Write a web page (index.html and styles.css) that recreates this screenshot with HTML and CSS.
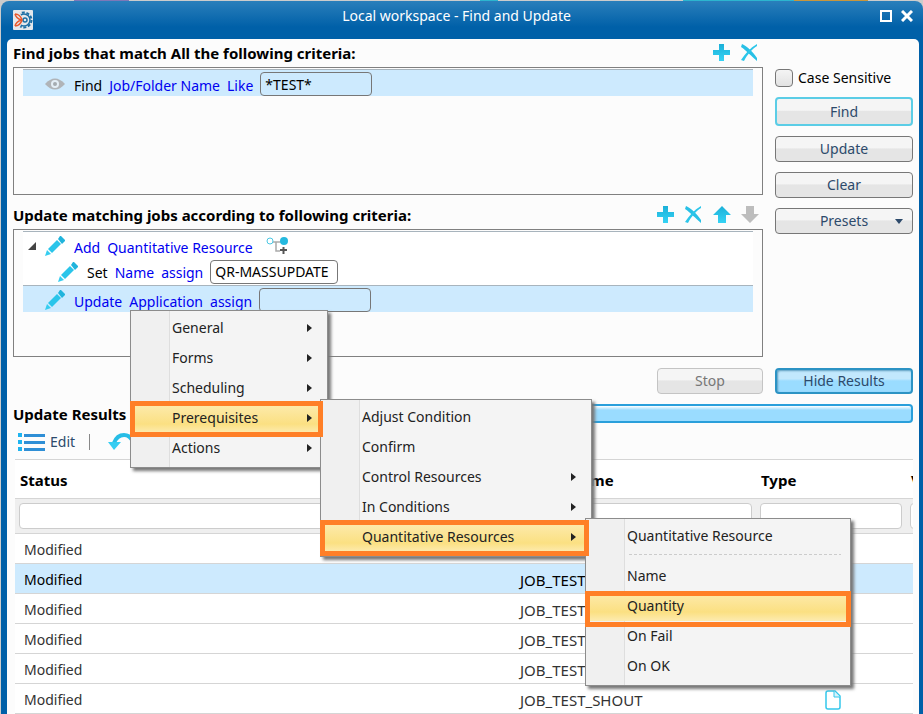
FILE: index.html
```
<!DOCTYPE html>
<html lang="en">
<head>
    <meta charset="UTF-8">
    <meta name="viewport" content="width=device-width, initial-scale=1.0">
    <title>Local workspace - Find and Update</title>
    <link rel="stylesheet" href="styles.css">
</head>
<body>
    <svg class="defs" width="0" height="0">
        <defs>
            <linearGradient id="cyan" x1="0" y1="0" x2="0" y2="1">
                <stop offset="0" stop-color="#1cb0d8"/>
                <stop offset="1" stop-color="#35d3f5"/>
            </linearGradient>
            <symbol id="plus" viewBox="0 0 18 18">
                <path d="M6 0h5v6h6v5h-6v6H6v-6H0V6h6z" fill="url(#cyan)"/>
            </symbol>
            <symbol id="cross" viewBox="0 0 18 18">
                <path d="M1 0C6 2 12 8 16 14V17C11 13 5 6 0 3z" fill="#28c0e6"/>
                <path d="M16 0v2C11 5 6 11 3 17L0 16C4 10 9 4 16 0z" fill="#2cc6ea"/>
            </symbol>
            <symbol id="pencil" viewBox="0 0 20 20">
                <path d="M13 3l2-3h1l4 4v1l-3 3z" fill="#20b4dc"/>
                <path d="M12 4l4 4L7 17l-4-4z" fill="#2ac5ea"/>
                <path d="M2 14l4 4-6 2z" fill="#35cdf0"/>
            </symbol>
            <symbol id="up" viewBox="0 0 18 18">
                <path d="M9 0l9 9h-5v8H5V9H0z" fill="url(#cyan)"/>
            </symbol>
            <symbol id="down" viewBox="0 0 18 18">
                <path d="M5 0h8v8h5l-9 9-9-9h5z" fill="#bdbdbd"/>
            </symbol>
        </defs>
    </svg>

    <div class="window">
        <header class="titlebar">
            <svg class="logo" width="20" height="20" viewBox="0 0 20 20">
                <rect width="20" height="20" rx="1" fill="#e4e8ec"/>
                <circle cx="11" cy="10" r="7.500" fill="none" stroke="#1d6fa5" stroke-width="2" stroke-dasharray="3 1.700"/>
                <circle cx="11" cy="10" r="6" fill="none" stroke="#1d6fa5" stroke-width="1.500"/>
                <path d="M0 3h7l3 7-3 7H0z" fill="#e4e8ec"/>
                <circle cx="12" cy="10" r="2" fill="none" stroke="#1d6fa5" stroke-width="1.500"/>
                <path d="M2 4q5 0 7 6q-2 6-7 6M2 4q1 4 6 6q-5 2-6 6" fill="none" stroke="#e8582c" stroke-width="1.500"/>
            </svg>
            <h1>Local workspace - Find and Update</h1>
            <button class="win-btn" aria-label="Maximize">
                <svg width="12" height="12"><path d="M1 1h10v10H1z" fill="none" stroke="#fff" stroke-width="2"/></svg>
            </button>
            <button class="win-btn" aria-label="Close">
                <svg width="12" height="12"><path d="M1 1l10 10M11 1L1 11" stroke="#fff" stroke-width="3"/></svg>
            </button>
        </header>

        <main class="panel">
            <div class="top">
                <div class="criteria">
                    <div class="section-head">
                        <h2>Find jobs that match All the following criteria:</h2>
                        <div class="tools">
                            <button aria-label="Add"><svg width="18" height="18"><use href="#plus"/></svg></button>
                            <button aria-label="Delete"><svg width="18" height="18"><use href="#cross"/></svg></button>
                        </div>
                    </div>
                    <div class="tree">
                        <div class="node first selected">
                            <svg width="20" height="12" viewBox="0 0 20 12">
                                <path d="M0 6Q10-5 20 6Q10 17 0 6z" fill="#b0b4b8"/>
                                <circle cx="10" cy="6" r="4" fill="#e4eef6"/>
                                <circle cx="10" cy="6" r="2" fill="#a5abb0"/>
                            </svg>
                            <span>Find</span>
                            <a href="#">Job/Folder Name</a>
                            <a href="#">Like</a>
                            <input class="value" type="text" value="*TEST*" aria-label="Job/Folder Name">
                        </div>
                    </div>

                    <div class="section-head update-head">
                        <h2>Update matching jobs according to following criteria:</h2>
                        <div class="tools">
                            <button aria-label="Add"><svg width="18" height="18"><use href="#plus"/></svg></button>
                            <button aria-label="Delete"><svg width="18" height="18"><use href="#cross"/></svg></button>
                            <button aria-label="Move up"><svg width="18" height="18"><use href="#up"/></svg></button>
                            <button aria-label="Move down"><svg width="18" height="18"><use href="#down"/></svg></button>
                        </div>
                    </div>
                    <div class="tree">
                        <div class="node first white has-toggle">
                            <svg class="toggle" width="9" height="9"><path d="M8 0v8H0z" fill="#444"/></svg>
                            <svg width="20" height="20"><use href="#pencil"/></svg>
                            <a href="#">Add</a>
                            <a href="#">Quantitative Resource</a>
                            <svg class="branch" width="22" height="18" viewBox="0 0 22 18">
                                <path d="M7 5h8M10 5v9h4" fill="none" stroke="#aaa" stroke-width="1.500"/>
                                <circle cx="4" cy="4" r="3" fill="#fff" stroke="#4cc8e4"/>
                                <circle cx="18" cy="4" r="4" fill="#25b9df"/>
                                <path d="M14 13h7M17.500 10v7" stroke="#555" stroke-width="2"/>
                            </svg>
                        </div>
                        <div class="node white child">
                            <svg width="20" height="20"><use href="#pencil"/></svg>
                            <span>Set</span>
                            <a href="#">Name</a>
                            <a href="#">assign</a>
                            <input class="value wide" type="text" value="QR-MASSUPDATE" aria-label="Resource name">
                        </div>
                        <div class="node first selected">
                            <svg width="20" height="20"><use href="#pencil"/></svg>
                            <a href="#">Update</a>
                            <a href="#">Application</a>
                            <a href="#">assign</a>
                            <input class="value" type="text" aria-label="Application">
                        </div>
                    </div>
                </div>

                <div class="actions">
                    <label class="case"><input type="checkbox"> Case Sensitive</label>
                    <button class="btn focus">Find</button>
                    <button class="btn">Update</button>
                    <button class="btn">Clear</button>
                    <button class="btn presets">Presets<svg width="8" height="5"><path d="M0 0h8L4 5z" fill="#2d4a6b"/></svg></button>
                </div>
            </div>

            <div class="result-actions">
                <button class="btn stop" disabled>Stop</button>
                <button class="btn pressed">Hide Results</button>
            </div>

            <div class="progress-row">
                <h2>Update Results</h2>
                <div class="bar"></div>
            </div>

            <div class="toolbar">
                <button class="edit">
                    <svg width="28" height="18" viewBox="0 0 28 18">
                        <path d="M0 0h4v4H0zM0 7h4v4H0zM0 14h4v4H0z" fill="#1eb4f0"/>
                        <path d="M6 1h21v3H6zM6 8h21v3H6zM6 15h21v3H6z" fill="#2f8fd6"/>
                    </svg>
                    Edit
                </button>
                <span class="divider"></span>
                <button aria-label="Undo">
                    <svg width="26" height="18" viewBox="0 0 26 18">
                        <path d="M6 10Q9 2 16 2Q22 2 25 9" fill="none" stroke="#27bde6" stroke-width="4"/>
                        <path d="M0 9h13l-7 8z" fill="#35cdf2"/>
                    </svg>
                </button>
            </div>

            <table class="results">
                <colgroup>
                    <col>
                    <col class="col-name">
                    <col class="col-type">
                    <col class="col-last">
                </colgroup>
                <thead>
                    <tr class="titles"><th>Status</th><th>Object Name</th><th>Type</th><th>Version</th></tr>
                    <tr class="filters">
                        <td><input type="text" aria-label="Filter status"></td>
                        <td><input type="text" aria-label="Filter name"></td>
                        <td><input type="text" aria-label="Filter type"></td>
                        <td><input type="text" aria-label="Filter version"></td>
                    </tr>
                </thead>
                <tbody>
                    <tr><td>Modified</td><td class="name"></td><td></td><td></td></tr>
                    <tr class="selected"><td>Modified</td><td class="name">JOB_TEST</td><td></td><td></td></tr>
                    <tr><td>Modified</td><td class="name">JOB_TEST</td><td></td><td></td></tr>
                    <tr><td>Modified</td><td class="name">JOB_TEST</td><td></td><td></td></tr>
                    <tr><td>Modified</td><td class="name">JOB_TEST</td><td></td><td></td></tr>
                    <tr>
                        <td>Modified</td>
                        <td class="name">JOB_TEST_SHOUT</td>
                        <td class="type">
                            <svg width="16" height="20" viewBox="0 0 16 20">
                                <path d="M3 1h7l5 5v11q0 2-2 2H3q-2 0-2-2V3q0-2 2-2z" fill="#fff" stroke="#35c8ec" stroke-width="1.500"/>
                                <path d="M9 1v6h6" fill="#d9f3fb" stroke="#35c8ec"/>
                            </svg>
                        </td>
                        <td></td>
                    </tr>
                    <tr><td></td><td></td><td></td><td></td></tr>
                </tbody>
            </table>
        </main>
    </div>

    <ul class="menu">
        <li class="more">General</li>
        <li class="more">Forms</li>
        <li class="more">Scheduling</li>
        <li class="more active">Prerequisites
            <ul class="menu sub">
                <li>Adjust Condition</li>
                <li>Confirm</li>
                <li class="more">Control Resources</li>
                <li class="more">In Conditions</li>
                <li class="more active">Quantitative Resources
                    <ul class="menu sub last">
                        <li>Quantitative Resource</li>
                        <li class="separator"></li>
                        <li>Name</li>
                        <li class="active">Quantity</li>
                        <li>On Fail</li>
                        <li>On OK</li>
                    </ul>
                </li>
            </ul>
        </li>
        <li class="more">Actions</li>
    </ul>
</body>
</html>
```

FILE: styles.css
```
* {
    box-sizing: border-box;
}
html, body {
    height: 100%;
    margin: 0;
}
body {
    position: relative;
    overflow: hidden;
    padding: 1px 0 0 1px;
    font-family: "Noto Sans", Tahoma, sans-serif;
    font-size: 14px;
    line-height: 20px;
    color: #000;
    background: linear-gradient(90deg, #ccc 0 8%, #7d78b8 8% 14%, #ccc 14% 52%, #2cb5cf 52% 54%, #ccc 54% 74%, #2cb5cf 74% 86%, #c8963c 86% 94%, #ccc 94%);
}
.defs {
    position: absolute;
}
h1, h2 {
    margin: 0;
}
h2 {
    font-size: 15px;
    font-weight: bold;
}
button, input {
    font: inherit;
}
button {
    padding: 0;
    border: none;
    background: none;
    color: #2d4a6b;
}
svg {
    display: block;
    flex: none;
}
.window {
    display: flex;
    flex-direction: column;
    height: 100%;
    padding: 0 4px 0 6px;
    border-radius: 8px 8px 0 0;
    background: linear-gradient(#2a7fbb, #0060a8 26px, #0060a8);
}
.titlebar {
    display: flex;
    align-items: center;
    gap: 9px;
    height: 38px;
    padding: 0 6px;
}
.titlebar h1 {
    flex: 1;
    padding-bottom: 8px;
    font-size: 14px;
    font-weight: normal;
    text-align: center;
    color: #fff;
}
.win-btn {
    padding-bottom: 8px;
}
.panel {
    flex: 1;
    min-height: 0;
    overflow: hidden;
    padding: 0 6px;
    border-radius: 5px 5px 0 0;
    background: #fcfcfc;
}
.top {
    display: grid;
    grid-template-columns: 1fr 138px;
    gap: 12px;
}
.section-head {
    display: flex;
    align-items: center;
    justify-content: space-between;
    height: 28px;
}
.update-head {
    height: 34px;
    padding-top: 6px;
}
.tools {
    display: flex;
    gap: 10px;
    padding-right: 4px;
}
.tree {
    height: 128px;
    padding: 1px 9px;
    border: 1px solid #808080;
}
.node {
    display: flex;
    align-items: center;
    gap: 7px;
    height: 27px;
    padding-left: 22px;
    padding-top: 2px;
}
.node.first {
    border-top: 1px solid #a8b4bd;
}
.node.white {
    background: #fff;
}
.node.selected {
    background: #cdeafe;
}
.node.child {
    padding-left: 35px;
    padding-top: 0;
}
.node.has-toggle {
    padding-left: 5px;
}
.node svg {
    margin-right: 2px;
}
.node .toggle {
    margin-right: 1px;
}
.node .branch {
    margin-left: 6px;
}
.node a, .node span {
    padding-top: 3px;
}
.node a {
    color: #0000f0;
    text-decoration: none;
}
.value {
    width: 112px;
    height: 24px;
    padding: 0 4px;
    border: 1px solid #777;
    border-radius: 4px;
    background: transparent;
}
.value.wide {
    width: 128px;
}
.actions {
    display: flex;
    flex-direction: column;
    gap: 10px;
    padding-top: 30px;
}
.case {
    display: flex;
    align-items: center;
    gap: 5px;
    height: 18px;
}
.case input {
    appearance: none;
    width: 18px;
    height: 18px;
    margin: 0;
    border: 1px solid #777;
    border-radius: 4px;
    background: linear-gradient(#f4f4f4, #e2e2e2);
}
.btn {
    height: 26px;
    border: 1px solid #777;
    border-radius: 4px;
    background: linear-gradient(#f5f5f5 0 45%, #e5e5e5 50%);
}
.btn.focus {
    height: 29px;
    border: 2px solid #5bcde6;
}
.presets {
    display: grid;
    grid-template-columns: 1fr auto 1fr;
    align-items: center;
}
.presets::before {
    content: "";
}
.presets svg {
    justify-self: end;
    margin-right: 9px;
}
.result-actions {
    display: flex;
    justify-content: flex-end;
    gap: 12px;
    padding-top: 11px;
}
.stop {
    width: 106px;
    border-color: #c4c4c4;
    color: #777;
}
.pressed {
    width: 138px;
    border: 2px solid #2c93c4;
    background: linear-gradient(#c2e8fd 0 40%, #9adcff 50%);
    box-shadow: inset 1px 1px 2px #5c9dbf;
}
.progress-row {
    display: flex;
    align-items: center;
    gap: 10px;
    height: 19px;
    margin-top: 10px;
}
.bar {
    flex: 1;
    height: 19px;
    border: 2px solid #2a9fdb;
    border-radius: 4px;
    background: linear-gradient(#fff, #9adcff 4px);
}
.toolbar {
    display: flex;
    align-items: center;
    gap: 14px;
    height: 36px;
    padding: 2px 0 0 5px;
}
.edit {
    display: flex;
    align-items: center;
    gap: 4px;
}
.divider {
    width: 1px;
    height: 16px;
    margin-right: 4px;
    background: #888;
}
.results {
    width: 100%;
    table-layout: fixed;
    border-collapse: collapse;
    border-left: 2px solid #fcfcfc;
    background: #fff;
}
.col-name {
    width: 245px;
}
.col-type {
    width: 150px;
}
.col-last {
    width: 7px;
}
.results th, .results td {
    overflow: hidden;
    padding: 2px 0 0 9px;
    height: 30px;
    border-top: 1px solid #d5d5d5;
    text-align: left;
    white-space: nowrap;
    color: #333;
}
.results .titles th {
    height: 39px;
    padding-left: 5px;
    font-size: 15px;
    color: #000;
}
.results .filters td {
    height: 35px;
    padding: 0 4px;
    background: #efefef;
}
.filters input {
    display: block;
    width: 100%;
    min-width: 30px;
    height: 26px;
    border: 1px solid #ccc;
    border-radius: 4px;
    background: #fff;
}
.results .name {
    font-size: 15px;
}
.results .selected td {
    background: #cdeafe;
    color: #000;
}
.type svg {
    margin-left: 60px;
}
.menu {
    position: absolute;
    top: 310px;
    left: 130px;
    width: 198px;
    margin: 0;
    padding: 2px 0 4px;
    border: 1px solid #8c8c8c;
    background: linear-gradient(90deg, #f0f0f0 38px, #dedede 38px 39px, #f4f4f4 39px);
    box-shadow: 3px 3px 3px #777;
    list-style: none;
    color: #222;
}
.menu li {
    position: relative;
    height: 30px;
    padding-left: 41px;
    line-height: 30px;
}
.menu .more::before {
    content: "";
    position: absolute;
    top: 11px;
    right: 15px;
    border: 4px solid transparent;
    border-left: 5px solid #222;
    border-right: none;
}
.menu .active {
    background: linear-gradient(#fdebb0, #fbe082 70%, #fdebb0);
}
/* orange callout frame around the chosen entries */
.menu .active::after {
    content: "";
    position: absolute;
    z-index: 5;
    top: -2px;
    right: 4px;
    bottom: -4px;
    left: -1px;
    border: 5px solid #ff7f27;
}
.menu .sub {
    top: -4px;
    left: 189px;
    width: 272px;
}
.sub > .active::after {
    right: 2px;
}
.menu .last {
    left: 264px;
    width: 266px;
}
.menu .last .active::after {
    top: 0;
    right: -1px;
    bottom: -6px;
}
.menu .separator {
    height: 10px;
    margin: 0 9px 0 43px;
    padding: 0;
    background: linear-gradient(90deg, #ccc 60%, transparent 60%) 0 3px / 5px 1px repeat-x;
}
```
